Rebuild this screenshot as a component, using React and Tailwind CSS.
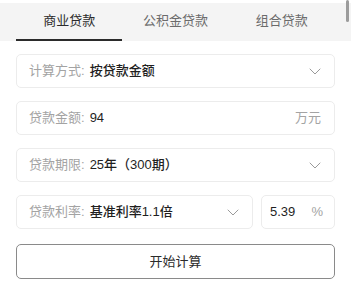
const FONT = { fontFamily: '"Liberation Sans", "Noto Sans CJK SC", sans-serif' };

const TABS = ['商业贷款', '公积金贷款', '组合贷款'];

const Chevron = () => (
  <svg width="12" height="7" viewBox="0 0 12 7" fill="none" className="shrink-0">
    <path d="M1 1l5 5 5-5" stroke="#9a9a9a" strokeWidth="1" strokeLinecap="round" strokeLinejoin="round" />
  </svg>
);

const Field = ({ label, value, suffix, select, className = '' }) => (
  <div
    className={
      'flex h-[34px] items-center rounded-[5px] border border-[#ececec] bg-white pl-3 pr-[13px] text-[13px] ' +
      className
    }
  >
    <span className="text-[#a3a3a3]">{label}</span>
    <span className="ml-[5px] flex-1 font-medium text-[#1f1f1f]">{value}</span>
    {suffix && <span className="text-[#a3a3a3]">{suffix}</span>}
    {select && <Chevron />}
  </div>
);

export default function App() {
  return (
    <div className="relative h-[284px] w-[351px] overflow-hidden bg-white" style={FONT}>
      <div className="pt-[3px]">
        <div className="bg-[#f4f4f4] px-4">
          <div className="grid grid-cols-3">
            {TABS.map((tab, i) => (
              <div
                key={tab}
                className={
                  'flex h-[38px] items-center justify-center border-b-2 text-[13px] ' +
                  (i === 0 ? 'border-[#2b2b2b] text-[#2b2b2b]' : 'border-transparent text-[#6b6b6b]')
                }
              >
                {tab}
              </div>
            ))}
          </div>
        </div>
      </div>

      <div className="flex flex-col gap-[13px] px-4 pt-[13px]">
        <Field label="计算方式:" value="按贷款金额" select />
        <Field label="贷款金额:" value="94" suffix="万元" />
        <Field label="贷款期限:" value="25年（300期）" select />
        <div className="flex gap-2">
          <Field label="贷款利率:" value="基准利率1.1倍" select className="flex-1" />
          <div className="flex h-[34px] w-[74px] items-center rounded-[5px] border border-[#ececec] bg-white pl-[8px] pr-[11px] text-[13px]">
            <span className="flex-1 font-medium text-[#1f1f1f]">5.39</span>
            <span className="text-[#a3a3a3]">%</span>
          </div>
        </div>
        <button
          type="button"
          className="mt-[2px] flex h-[35px] items-center justify-center rounded-[5px] border border-[#8a8a8a] bg-white text-[13px] text-[#2b2b2b]"
        >
          开始计算
        </button>
      </div>

      <div className="absolute right-[2px] top-0 h-[22px] w-[3px] rounded-full bg-[#9c9c9c]" />
    </div>
  );
}
